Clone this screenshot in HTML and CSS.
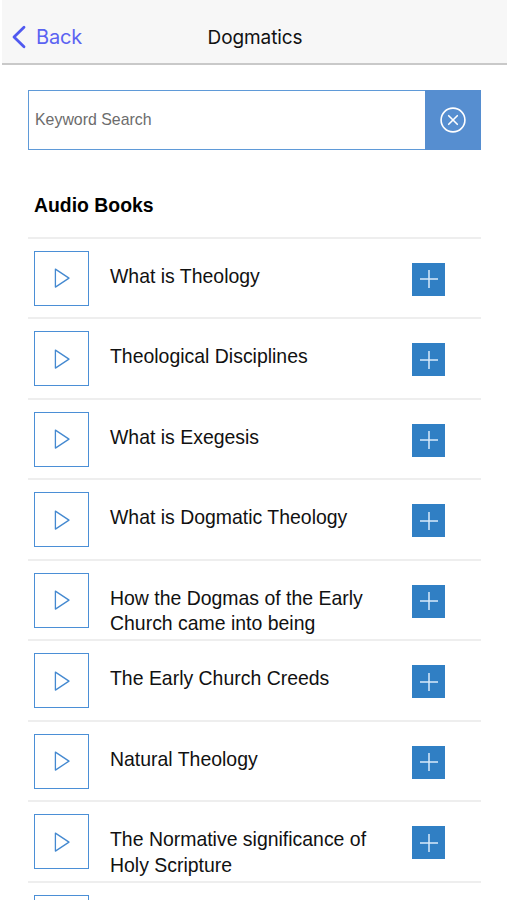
FILE: index.html
```html
<!DOCTYPE html>
<html lang="en">
<head>
<meta charset="utf-8">
<title>Dogmatics</title>
<link rel="stylesheet" href="styles.css">
</head>
<body>
<svg class="symbols" aria-hidden="true">
  <symbol id="play" viewBox="0 0 18 22"><path d="M2.4 2.1V20.1L16 11.1Z" fill="none" stroke="#4489d0" stroke-width="1.3" stroke-linejoin="round"/></symbol>
  <symbol id="plus" viewBox="0 0 20 20"><path d="M10 1V19M1 10H19" fill="none" stroke="#d8eafa" stroke-width="1.5"/></symbol>
</svg>
<header class="navbar">
  <a class="back"><svg class="chevron" viewBox="0 0 14 24"><path d="M12 2.3L2 12L12 21.7" fill="none" stroke="#5059f0" stroke-width="2.8" stroke-linecap="round" stroke-linejoin="round"/></svg><span>Back</span></a>
  <h1 class="title">Dogmatics</h1>
</header>
<main class="content">
  <div class="search">
    <div class="field">Keyword Search</div>
    <div class="clear"><svg viewBox="0 0 26 26"><circle cx="13" cy="13" r="11.9"/><path d="M8.7 8.7L17.3 17.3M17.3 8.7L8.7 17.3"/></svg></div>
  </div>
  <h2 class="heading">Audio Books</h2>
  <ul class="list">
    <li class="row"><span class="play"><svg><use href="#play"/></svg></span><span class="name">What is Theology</span><span class="add"><svg><use href="#plus"/></svg></span></li>
    <li class="row"><span class="play"><svg><use href="#play"/></svg></span><span class="name">Theological Disciplines</span><span class="add"><svg><use href="#plus"/></svg></span></li>
    <li class="row"><span class="play"><svg><use href="#play"/></svg></span><span class="name">What is Exegesis</span><span class="add"><svg><use href="#plus"/></svg></span></li>
    <li class="row"><span class="play"><svg><use href="#play"/></svg></span><span class="name">What is Dogmatic Theology</span><span class="add"><svg><use href="#plus"/></svg></span></li>
    <li class="row"><span class="play"><svg><use href="#play"/></svg></span><span class="name">How the Dogmas of the Early Church came into being</span><span class="add"><svg><use href="#plus"/></svg></span></li>
    <li class="row"><span class="play"><svg><use href="#play"/></svg></span><span class="name">The Early Church Creeds</span><span class="add"><svg><use href="#plus"/></svg></span></li>
    <li class="row"><span class="play"><svg><use href="#play"/></svg></span><span class="name">Natural Theology</span><span class="add"><svg><use href="#plus"/></svg></span></li>
    <li class="row"><span class="play"><svg><use href="#play"/></svg></span><span class="name">The Normative significance of Holy Scripture</span><span class="add"><svg><use href="#plus"/></svg></span></li>
    <li class="row"><span class="play"></span></li>
  </ul>
</main>
</body>
</html>
```
FILE: styles.css
```css
* { box-sizing: border-box; }
body {
  margin: 0;
  height: 900px;
  overflow: hidden;
  display: flex;
  flex-direction: column;
  background: #fff;
  color: #111;
  font-family: "Liberation Sans", Arial, sans-serif;
}
svg { display: block; }
.symbols { position: absolute; width: 0; height: 0; }
.navbar {
  flex: none;
  height: 65px;
  margin-left: 2px;
  padding: 10px 9px 0 10px;
  display: grid;
  grid-template-columns: 1fr auto 1fr;
  align-items: center;
  background: #f7f7f7;
  border-bottom: 2px solid #c9c9c9;
  font-family: Inter, sans-serif;
}
.back { display: flex; align-items: center; gap: 10px; color: #5b63f2; font-size: 20px; line-height: 24px; letter-spacing: -0.2px; }
.chevron { width: 14px; height: 24px; }
.title { margin: 2px 0 0; font-size: 19px; line-height: 24px; font-weight: 400; letter-spacing: -0.1px; }
.content { flex: 1; min-height: 0; overflow: hidden; padding: 25px 26px 0 28px; }
.search { display: flex; height: 60px; }
.field {
  flex: 1;
  display: flex;
  align-items: center;
  padding-left: 6px;
  border: 1px solid #5f9ad8;
  border-right: 0;
  color: #6c6c6c;
  font-size: 15.9px;
}
.clear { width: 56px; display: flex; align-items: center; justify-content: center; background: #568ed0; }
.clear svg { width: 26px; height: 26px; fill: none; stroke: #fff; stroke-width: 1.6; stroke-linecap: round; }
.heading { margin: 42px 0 0 6px; height: 44.6px; font-size: 19.4px; line-height: 26px; color: #000; }
.list { margin: 0; padding: 0; list-style: none; }
.row {
  height: 80.5px;
  padding: 12.3px 36px 0 6px;
  display: flex;
  align-items: flex-start;
  border-top: 2px solid #eee;
}
.play { width: 55px; height: 55px; border: 1px solid #4b8fd6; display: flex; align-items: center; justify-content: center; }
.play svg { width: 18px; height: 22px; }
.name { flex: 1; margin: 13px 18px 0 21px; font-size: 19.45px; line-height: 25.5px; }
.add { width: 33px; height: 33px; margin-top: 12.1px; display: flex; align-items: center; justify-content: center; background: #307fc4; }
.add svg { width: 20px; height: 20px; }
```
